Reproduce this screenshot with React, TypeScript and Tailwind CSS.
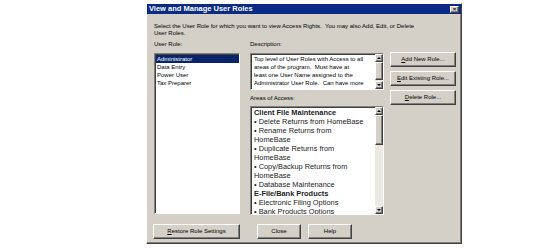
import React from 'react';

const raised =
  'bg-[#d4d0c8] border border-t-white border-l-white border-b-[#404040] border-r-[#404040] shadow-[inset_-1px_-1px_0_#808080]';
const sunken =
  'bg-white border border-t-[#808080] border-l-[#808080] border-b-white border-r-white shadow-[inset_1px_1px_0_#404040]';

const Arrow: React.FC<{ dir: 'up' | 'down' }> = ({ dir }) => (
  <div className={`w-[8px] h-[8px] flex items-center justify-center ${raised}`}>
    {dir === 'up' ? (
      <div className="w-0 h-0 border-l-[2px] border-r-[2px] border-b-[2px] border-l-transparent border-r-transparent border-b-black" />
    ) : (
      <div className="w-0 h-0 border-l-[2px] border-r-[2px] border-t-[2px] border-l-transparent border-r-transparent border-t-black" />
    )}
  </div>
);

const ScrollBar: React.FC<{ thumb: number }> = ({ thumb }) => (
  <div className="w-[8px] shrink-0 flex flex-col bg-[#ece9e3]">
    <Arrow dir="up" />
    <div className={`w-[8px] ${raised}`} style={{ height: thumb }} />
    <div className="flex-1" />
    <Arrow dir="down" />
  </div>
);

const Btn: React.FC<{ u: string; rest: string; className?: string }> = ({ u, rest, className }) => (
  <div className={`h-[15px] flex items-center justify-center text-[6px] text-black ${raised} ${className ?? ''}`}>
    <span>
      <span className="underline">{u}</span>
      {rest}
    </span>
  </div>
);

const roles = ['Administrator', 'Data Entry', 'Power User', 'Tax Preparer'];

const areas: { t: string; b?: boolean }[] = [
  { t: 'Client File Maintenance', b: true },
  { t: '• Delete Returns from HomeBase' },
  { t: '• Rename Returns from' },
  { t: 'HomeBase' },
  { t: '• Duplicate Returns from' },
  { t: 'HomeBase' },
  { t: '• Copy/Backup Returns from' },
  { t: 'HomeBase' },
  { t: '• Database Maintenance' },
  { t: 'E-File/Bank Products', b: true },
  { t: '• Electronic Filing Options' },
  { t: '• Bank Products Options' },
];

export default function App() {
  return (
    <div className="w-[553px] h-[248px] bg-white overflow-hidden pt-[3px] pl-[146px] font-['Liberation_Sans',Arial,sans-serif]">
      <div className={`w-[316px] h-[241px] flex flex-col ${raised}`}>
        {/* title bar */}
        <div className="h-[10px] bg-[#0a2a86] flex items-center justify-between pl-[2px] pr-[2px]">
          <span className="text-white font-bold text-[7.5px] leading-none">View and Manage User Roles</span>
          <div className={`w-[9px] h-[7px] flex items-center justify-center text-[6px] font-bold leading-none text-black ${raised}`}>
            ×
          </div>
        </div>

        <div className="pl-[7px] flex flex-col">
          <p className="mt-[9px] text-[6px] leading-[7px] text-black">
            Select the User Role for which you want to view Access Rights.&nbsp; You may also Add, Edit, or Delete
            <br />
            User Roles.
          </p>

          <div className="mt-[4px] flex text-[6px] leading-[7px] text-black">
            <span className="w-[96px]">User Role:</span>
            <span>Description:</span>
          </div>

          <div className="mt-[5px] flex items-start">
            {/* role list */}
            <div className={`w-[86px] h-[161px] pt-[1px] pl-[1px] ${sunken}`}>
              {roles.map((r, i) => (
                <div
                  key={r}
                  className={`h-[8px] leading-[8px] text-[6px] pl-[1px] ${i === 0 ? 'bg-[#0a246a] text-white' : 'text-black'}`}
                >
                  {r}
                </div>
              ))}
            </div>

            <div className="ml-[10px] flex items-start">
              <div className="w-[134px] flex flex-col">
                <div className={`h-[37px] flex ${sunken}`}>
                  <div className="flex-1 pl-[3px] pt-[1px] text-[6px] leading-[8px] text-black whitespace-pre overflow-hidden">
                    {'Top level of User Roles with Access to all\nareas of the program.  Must have at\nleast one User Name assigned to the\nAdministrator User Role.  Can have more'}
                  </div>
                  <ScrollBar thumb={18} />
                </div>

                <span className="mt-[5px] text-[6px] leading-[7px] text-black">Areas of Access:</span>

                <div className={`mt-[4px] h-[109px] flex ${sunken}`}>
                  <div className="flex-1 pl-[3px] pt-[1px] text-[7.4px] leading-[9px] text-[#222] whitespace-nowrap overflow-hidden">
                    {areas.map((a, i) => (
                      <div key={i} className={a.b ? 'font-bold' : ''}>
                        {a.t}
                      </div>
                    ))}
                  </div>
                  <ScrollBar thumb={30} />
                </div>
              </div>

              <div className="ml-[6px] -mt-[1px] w-[66px] flex flex-col gap-[4px]">
                <Btn u="A" rest="dd New Role..." />
                <Btn u="E" rest="dit Existing Role..." />
                <Btn u="D" rest="elete Role..." />
              </div>
            </div>
          </div>

          <div className="mt-[9px] flex">
            <Btn u="R" rest="estore Role Settings" className="-ml-[1px] w-[87px] h-[14px]" />
            <Btn u="" rest="Close" className="ml-[17px] w-[44px] h-[14px]" />
            <Btn u="" rest="Help" className="ml-[7px] w-[44px] h-[14px]" />
          </div>
        </div>
      </div>
    </div>
  );
}
